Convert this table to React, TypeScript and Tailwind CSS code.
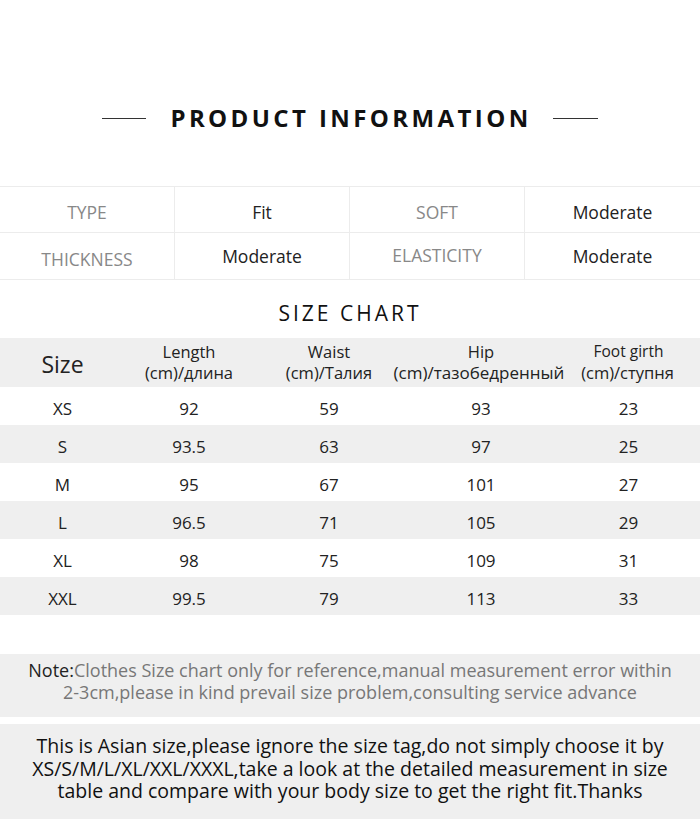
import React from "react";

const rows = [
  ["XS", "92", "59", "93", "23"],
  ["S", "93.5", "63", "97", "25"],
  ["M", "95", "67", "101", "27"],
  ["L", "96.5", "71", "105", "29"],
  ["XL", "98", "75", "109", "31"],
  ["XXL", "99.5", "79", "113", "33"],
];

const cols = "grid grid-cols-[125px_128px_152px_152px_143px]";

export default function App() {
  return (
    <div
      className="w-[700px] h-[833px] bg-white overflow-hidden text-[#222]"
      style={{ fontFamily: '"Open Sans", "Noto Sans", sans-serif' }}
    >
      {/* Title */}
      <div className="h-[186px] pt-[101px]">
        <div className="flex items-center justify-center h-[34px]">
          <div className="w-[44px] h-px bg-[#333]" />
          <div className="ml-[24px] mr-[21px] text-[24px] font-bold tracking-[3.4px] text-[#111] leading-none">
            PRODUCT INFORMATION
          </div>
          <div className="w-[45px] h-px bg-[#333]" />
        </div>
      </div>

      {/* Info table */}
      <div className="border-t border-b border-[#ececec]">
        <div className="grid grid-cols-4 h-[46px] border-b border-[#ececec] text-[17.5px]">
          <div className="flex items-center justify-center text-[#888] border-r border-[#ececec] pt-[6px]">TYPE</div>
          <div className="flex items-center justify-center border-r border-[#ececec] pt-[6px]">Fit</div>
          <div className="flex items-center justify-center text-[#888] border-r border-[#ececec] pt-[6px]">SOFT</div>
          <div className="flex items-center justify-center pt-[6px]">Moderate</div>
        </div>
        <div className="grid grid-cols-4 h-[46px] text-[17.5px]">
          <div className="flex items-center justify-center text-[#888] border-r border-[#ececec] pt-[6px]">THICKNESS</div>
          <div className="flex items-center justify-center border-r border-[#ececec]">Moderate</div>
          <div className="flex items-center justify-center text-[#888] border-r border-[#ececec] pb-[2px]">ELASTICITY</div>
          <div className="flex items-center justify-center">Moderate</div>
        </div>
      </div>

      {/* Size chart title */}
      <div className="h-[58px] flex items-center justify-center pt-[8px]">
        <div className="text-[21px] tracking-[3px] text-[#111] leading-none">SIZE CHART</div>
      </div>

      {/* Header */}
      <div className={`${cols} h-[49px] bg-[#efefef] items-center text-center whitespace-nowrap`}>
        <div className="text-[23px] leading-none pt-[3px]">Size</div>
        <div className="text-[16.5px] leading-[21px] pb-[2px]">
          <div>Length</div>
          <div>(cm)/длина</div>
        </div>
        <div className="text-[16.5px] leading-[21px] pb-[2px]">
          <div>Waist</div>
          <div>(cm)/Талия</div>
        </div>
        <div className="text-[16.5px] leading-[21px] pb-[2px] flex flex-col items-center">
          <div>Hip</div>
          <div className="-ml-[4px] text-[17px]">(cm)/тазобедренный</div>
        </div>
        <div className="text-[15.5px] leading-[21px] pb-[2px] flex flex-col items-center">
          <div>Foot girth</div>
          <div className="-ml-[2px] text-[16.5px]">(cm)/ступня</div>
        </div>
      </div>

      {/* Rows */}
      {rows.map((r, i) => (
        <div
          key={r[0]}
          className={`${cols} h-[38px] items-center text-center text-[17px] pt-[6px] ${i % 2 === 1 ? "bg-[#efefef]" : "bg-white"}`}
        >
          {r.map((c, j) => (
            <div key={j}>{c}</div>
          ))}
        </div>
      ))}

      <div className="h-[39px]" />

      {/* Note */}
      <div className="h-[63px] bg-[#efefef] flex flex-col items-center justify-center text-[18px] leading-[22px] text-[#777] text-center pb-[9px]">
        <div>
          <span className="text-[#222]">Note:</span>Clothes Size chart only for reference,manual measurement error within
        </div>
        <div>2-3cm,please in kind prevail size problem,consulting service advance</div>
      </div>

      <div className="h-[7px]" />

      {/* Asian size */}
      <div className="h-[95px] bg-[#efefef] flex flex-col items-center justify-center text-[19.5px] leading-[22.5px] text-[#111] text-center pb-[5px]">
        <div>This is Asian size,please ignore the size tag,do not simply choose it by</div>
        <div>XS/S/M/L/XL/XXL/XXXL,take a look at the detailed measurement in size</div>
        <div>table and compare with your body size to get the right fit.Thanks</div>
      </div>
    </div>
  );
}
